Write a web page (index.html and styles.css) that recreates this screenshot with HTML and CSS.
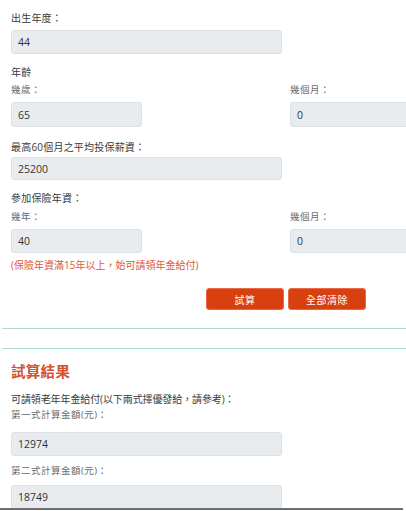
FILE: index.html
```html
<!DOCTYPE html>
<html lang="zh-Hant">
<head>
<meta charset="utf-8">
<title>試算</title>
<link rel="stylesheet" href="styles.css">
</head>
<body>
<div class="page">
  <form class="form">
    <div class="label l-birth">出生年度：</div>
    <input class="field wide f-birth" type="text" value="44" readonly>

    <div class="label l-age">年齡</div>
    <div class="pair p-age">
      <div class="col">
        <div class="sublabel">幾歲：</div>
        <input class="field half" type="text" value="65" readonly>
      </div>
      <div class="col">
        <div class="sublabel">幾個月：</div>
        <input class="field half" type="text" value="0" readonly>
      </div>
    </div>

    <div class="label l-salary">最高60個月之平均投保薪資：</div>
    <input class="field wide f-salary" type="text" value="25200" readonly>

    <div class="label l-years">參加保險年資：</div>
    <div class="pair p-years">
      <div class="col">
        <div class="sublabel">幾年：</div>
        <input class="field half" type="text" value="40" readonly>
      </div>
      <div class="col">
        <div class="sublabel">幾個月：</div>
        <input class="field half" type="text" value="0" readonly>
      </div>
    </div>
    <div class="note">(保險年資滿15年以上，始可請領年金給付)</div>

    <div class="actions">
      <button type="button" class="btn">試算</button>
      <button type="button" class="btn">全部清除</button>
    </div>
  </form>

  <hr class="rule r1">
  <hr class="rule r2">

  <section class="result">
    <h2 class="title">試算結果</h2>
    <div class="label l-intro">可請領老年年金給付(以下兩式擇優發給，請參考)：</div>
    <div class="sublabel s-first">第一式計算金額(元)：</div>
    <input class="field wide f-first" type="text" value="12974" readonly>
    <div class="sublabel s-second">第二式計算金額(元)：</div>
    <input class="field wide f-second" type="text" value="18749" readonly>
  </section>
</div>
<div class="hbar"></div>
</body>
</html>
```

FILE: styles.css
```css
html, body {
  margin: 0;
  padding: 0;
  overflow: hidden;
  background: #ffffff;
}
body {
  font-family: "Open Sans", "Noto Sans CJK TC", sans-serif;
  font-size: 10px;
  color: #3c3c3c;
  width: 406px;
  height: 511px;
}
.page {
  padding-left: 11px;
  width: 395px;
}
.form {
  margin: 0;
  padding-top: 10px;
}
.label {
  display: block;
  line-height: 16px;
  height: 16px;
  color: #3a3a3a;
  font-size: 10px;
  letter-spacing: 0.2px;
}
.sublabel {
  line-height: 16px;
  height: 16px;
  color: #6a6a6a;
  font-size: 9.5px;
  letter-spacing: 0.5px;
}
.field {
  display: block;
  box-sizing: border-box;
  height: 24px;
  margin: 4px 0 0 0;
  padding: 0 6px;
  border: 1px solid #dde0e4;
  border-radius: 3px;
  background: #e9ecef;
  font-family: "Open Sans", "Noto Sans CJK TC", sans-serif;
  font-size: 10.5px;
  color: #333333;
  outline: none;
}
.wide { width: 271px; }
.half { width: 131px; }

.l-age { margin-top: 10px; }
.pair {
  display: grid;
  grid-template-columns: 279px 131px;
  width: 410px;
}
.p-age { margin-top: 2px; }
.p-age .field { height: 25px; }

.l-salary { margin-top: 12px; }
.f-salary { margin-top: 2px; height: 23px; }

.l-years { margin-top: 10px; }
.p-years { margin-top: 3px; }

.note {
  margin-top: 4px;
  line-height: 16px;
  height: 16px;
  color: #e0573a;
  font-size: 10px;
  letter-spacing: 0;
}

.actions {
  display: flex;
  gap: 4px;
  margin-top: 15px;
  padding-left: 195px;
}
.btn {
  width: 78px;
  height: 22px;
  margin: 0;
  padding: 0;
  border: 1px solid #e9694a;
  border-radius: 3px;
  background: #d9400f;
  color: #ffffff;
  font-family: "Open Sans", "Noto Sans CJK TC", sans-serif;
  font-size: 10px;
  letter-spacing: 0.5px;
}

.rule {
  border: 0;
  height: 1px;
  background: #a9d9d1;
  margin: 0 0 0 -9px;
  width: 404px;
}
.r1 { margin-top: 18px; }
.r2 { margin-top: 19px; }

.result { margin: 0; }
.title {
  margin: 13px 0 0 0;
  line-height: 20px;
  height: 20px;
  font-size: 14.5px;
  font-weight: bold;
  color: #d4502e;
  letter-spacing: 0.3px;
}
.l-intro { margin-top: 9px; letter-spacing: -0.1px; }
.s-first { margin-top: 0; }
.f-first { margin-top: 9px; }
.s-second { margin-top: 7px; }
.f-second { margin-top: 6px; }

.hbar {
  position: fixed;
  left: 0;
  bottom: 1px;
  width: 403px;
  height: 2px;
  background: #6e6e6e;
}
```
